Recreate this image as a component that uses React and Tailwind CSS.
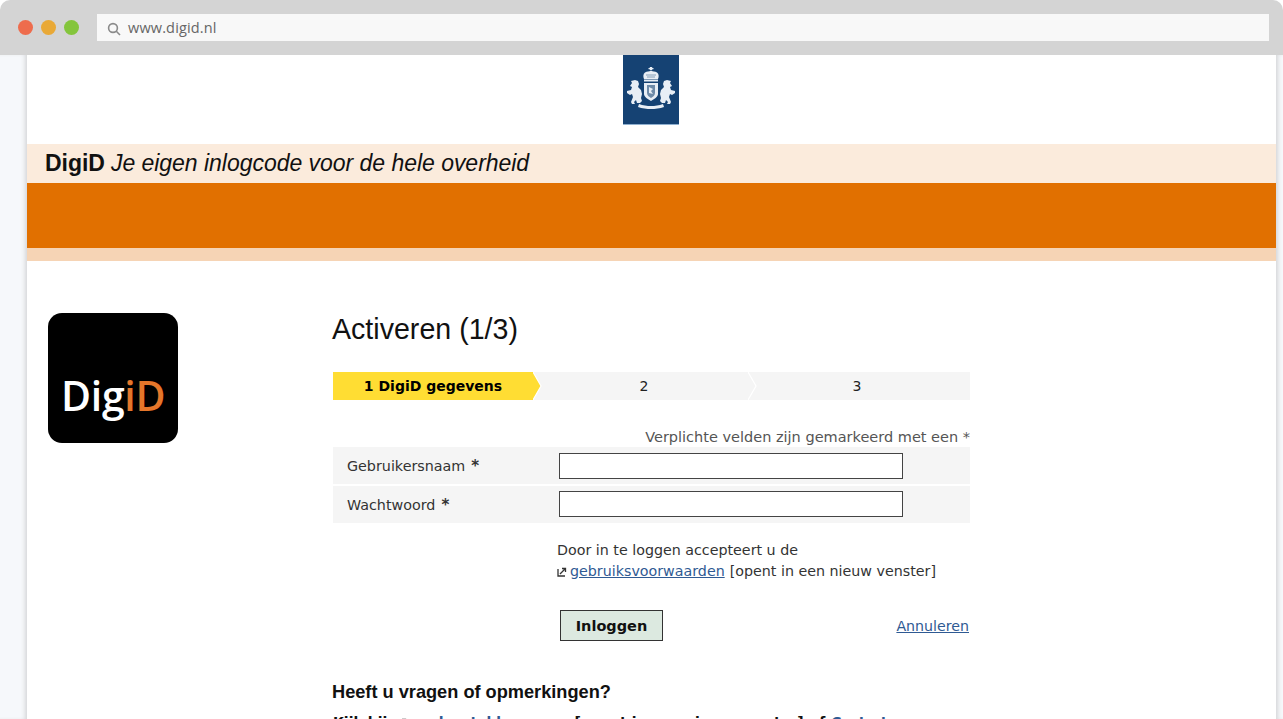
import React from "react";

function Crest() {
  return (
    <svg viewBox="0 0 56 70" className="block h-[70px] w-[56px]">
      <defs>
        <filter id="soft" x="-10%" y="-10%" width="120%" height="120%">
          <feGaussianBlur stdDeviation="0.35" />
        </filter>
      </defs>
      <rect width="56" height="70" fill="#154273" />
      <rect y="69" width="56" height="1" fill="#8fb0d0" />
      <g filter="url(#soft)" fill="#e8eef5">
        <rect x="26.800" y="12" width="2.400" height="3" />
        <rect x="25.500" y="13" width="5" height="1.200" />
        <path d="M21 24c-1-2-1-5 1-6.500 2-1.500 4-.5 6-2 2 1.500 4 .5 6 2 2 1.500 2 4.500 1 6.500z" />
        <rect x="21" y="24.500" width="14" height="2" />
        <path d="M21 28h14v11c0 3-4 5-7 7-3-2-7-4-7-7z" />
        <path d="M4 36l4-1 1-3-2-1 2-3-1-2 4-1 3 1 1 3-1 3 3 3 1 4-1 4 1 3-2 2h-3l-1-3-2 2 1 2h-3l-1-2 2-5-1-3-2 1-3-2z" />
        <path d="M52 36l-4-1-1-3 2-1-2-3 1-2-4-1-3 1-1 3 1 3-3 3-1 4 1 4-1 3 2 2h3l1-3 2 2-1 2h3l1-2-2-5 1-3 2 1 3-2z" />
        <path d="M16 49c4 1.500 8 2 12 2s8-.5 12-2l1 3c-4 1.500-9 2-13 2s-9-.5-13-2z" />
      </g>
      <g filter="url(#soft)">
        <path d="M24 30h8v8c0 2-2 4-4 5-2-1-4-3-4-5z" fill="#6d8aa8" />
        <path d="M26 32l4 2-2 2 2 3-4-1z" fill="#e8eef5" />
        <path d="M23 20h10M24 22h8" stroke="#6d8aa8" strokeWidth="0.800" />
      </g>
    </svg>
  );
}

function Logo() {
  return (
    <div className="relative h-[130px] w-[130px] rounded-[14px] bg-black">
      <div className="absolute top-[59px] left-[13px] font-['Open_Sans',sans-serif] text-[41px] leading-[46px] font-semibold tracking-[-0.3px] whitespace-nowrap text-white">
        Dig<span className="text-[#e5762a]">iD</span>
      </div>
    </div>
  );
}

function Chevron({ color, halo }) {
  return (
    <svg viewBox="0 0 9 28" className="absolute top-0 -right-[9px] z-10 h-[28px] w-[9px]">
      <path d="M0 0L8 14L0 28Z" fill={color} />
      {halo && <path d="M0 0L8 14L0 28" fill="none" stroke="#ffffff" strokeWidth="1.200" />}
    </svg>
  );
}

function Row({ label, inputClass }) {
  return (
    <div className="flex h-[37px] items-center bg-[#f5f5f5] pl-[14px] text-[14.3px] text-[#333]">
      <div className="w-[212px] pt-[1px]">
        {label}
        <span className="ml-[6px] text-[15px] font-bold">*</span>
      </div>
      <div className={inputClass} />
    </div>
  );
}

function ExternalIcon({ className }) {
  return (
    <svg viewBox="0 0 10 10" className={className} fill="none" stroke="#333" strokeWidth="1.300">
      <path d="M1 2v7h7" />
      <path d="M3 7l5-5M5 1.500h3.500V5" />
    </svg>
  );
}

export default function App() {
  return (
    <div className="flex h-[719px] w-[1283px] flex-col overflow-hidden bg-white font-['DejaVu_Sans',sans-serif] text-[14.5px]">
      <div className="flex h-[55px] shrink-0 items-center rounded-t-[10px] bg-[#d4d4d4] pr-[14px] pl-[18px]">
        <div className="flex gap-[8px]">
          <span className="h-[15px] w-[15px] rounded-full bg-[#ee6c4d]" />
          <span className="h-[15px] w-[15px] rounded-full bg-[#e9a937]" />
          <span className="h-[15px] w-[15px] rounded-full bg-[#84c53c]" />
        </div>
        <div className="ml-[18px] flex h-[27px] flex-1 items-center bg-[#f8f8f8] pl-[10px] text-[#666]">
          <svg viewBox="0 0 14 14" className="mt-[3px] mr-[7px] h-[14px] w-[14px]" fill="none" stroke="#8a8a8a" strokeWidth="1.600">
            <circle cx="6" cy="6" r="4.400" />
            <path d="M9.300 9.300L13 13" />
          </svg>
          <span className="font-['Open_Sans',sans-serif] text-[14.5px] tracking-[0.15px]">www.digid.nl</span>
        </div>
      </div>
      <div className="flex min-h-0 flex-1">
        <div className="w-[27px] shrink-0 bg-[#f6f8fb] shadow-[inset_-4px_0_4px_-2px_#d5d6d8]" />
        <div className="w-[1249px] shrink-0 bg-white">
          <div className="flex justify-center pr-[1px]">
            <Crest />
          </div>
          <div className="mt-[19px] flex h-[39px] items-center bg-[#fbebdc] pl-[18px] font-['Liberation_Sans',sans-serif] text-[23px] tracking-[-0.03px] text-[#111]">
            <b>DigiD</b>
            <i className="ml-[6px]">Je eigen inlogcode voor de hele overheid</i>
          </div>
          <div className="h-[65px] bg-[#e17000]" />
          <div className="h-[13px] bg-[#f6d4b5]" />
          <div className="flex pt-[52px] pl-[21px]">
            <div className="w-[285px] shrink-0">
              <Logo />
            </div>
            <div className="w-[637px]">
              <h1 className="-ml-[1px] font-['Liberation_Sans',sans-serif] text-[28.6px] leading-[32px] text-[#111]">Activeren (1/3)</h1>
              <div className="mt-[27px] flex h-[28px] bg-[#f5f5f5] text-[14px] text-[#222]">
                <div className="relative flex w-[200px] items-center justify-center bg-[#ffdd33] font-bold text-black">
                  1 DigiD gegevens
                  <Chevron color="#ffdd33" halo />
                </div>
                <div className="relative flex w-[215px] items-center justify-center pl-[7px]">
                  2
                  <Chevron color="#f5f5f5" halo />
                </div>
                <div className="flex flex-1 items-center justify-center pr-[4px]">3</div>
              </div>
              <p className="mt-[28px] text-right leading-[19px] whitespace-nowrap text-[#555]">Verplichte velden zijn gemarkeerd met een *</p>
              <div className="flex flex-col gap-[2px]">
                <Row label="Gebruikersnaam" inputClass="h-[26px] w-[344px] border border-[#444] bg-white" />
                <Row label="Wachtwoord" inputClass="-mt-[1px] h-[26px] w-[344px] border border-[#444] bg-white" />
              </div>
              <div className="mt-[17px] ml-[224px] text-[14.25px] leading-[21px] text-[#333]">
                <p>Door in te loggen accepteert u de</p>
                <p className="flex items-center whitespace-nowrap">
                  <ExternalIcon className="mr-[3px] h-[10px] w-[10px]" />
                  <a className="text-[#2f5a93] underline">gebruiksvoorwaarden</a>
                  <span className="ml-[5px]">[opent in een nieuw venster]</span>
                </p>
              </div>
              <div className="mt-[28px] ml-[227px] flex items-center justify-between">
                <button className="h-[31px] w-[103px] border border-[#333] bg-[#dce9e0] pt-[2px] font-bold text-[#111]">Inloggen</button>
                <a className="pt-[3px] pr-[1px] text-[14.2px] text-[#2f5a93] underline">Annuleren</a>
              </div>
              <h2 className="mt-[40px] -ml-[1px] font-['Liberation_Sans',sans-serif] text-[18.2px] leading-[22px] font-bold text-[#111]">Heeft u vragen of opmerkingen?</h2>
              <p className="mt-[11px] flex items-center text-[14px] leading-[17px] font-bold whitespace-nowrap text-[#111]">
                <span>Kijk bij</span>
                <ExternalIcon className="mr-[4px] ml-[10px] h-[10px] w-[10px]" />
                <a className="tracking-[-0.2px] text-[#2f5a93]">veelgestelde vragen</a>
                <span className="ml-[6px]">[opent in een nieuw venster]</span>
                <span className="ml-[6px]">of</span>
                <a className="ml-[6px] tracking-[-0.8px] text-[#2f5a93]">Contact opnemen</a>
              </p>
            </div>
          </div>
        </div>
        <div className="flex-1 bg-[#f6f8fb] shadow-[inset_4px_0_4px_-2px_#d5d6d8]" />
      </div>
    </div>
  );
}
